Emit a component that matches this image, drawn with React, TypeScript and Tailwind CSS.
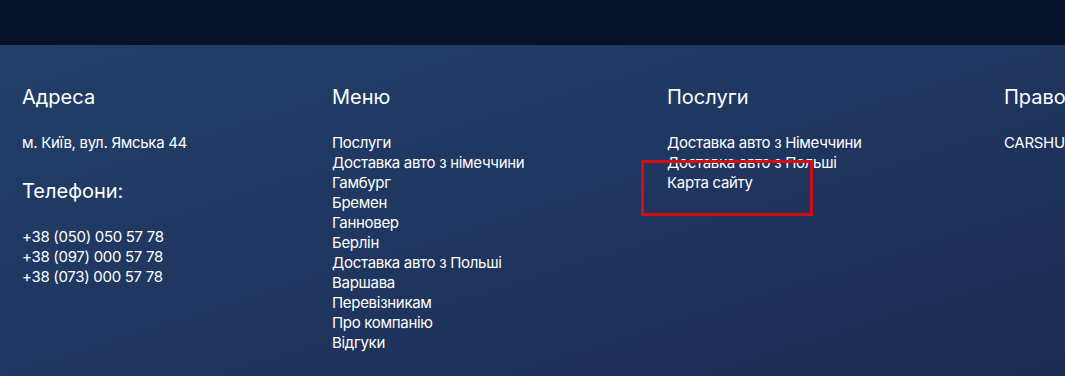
import React from "react";

const menu = [
  "Послуги",
  "Доставка авто з німеччини",
  "Гамбург",
  "Бремен",
  "Ганновер",
  "Берлін",
  "Доставка авто з Польші",
  "Варшава",
  "Перевізникам",
  "Про компанію",
  "Відгуки",
];

const services = ["Доставка авто з Німеччини", "Доставка авто з Польші", "Карта сайту"];

const phones = ["+38 (050) 050 57 78", "+38 (097) 000 57 78", "+38 (073) 000 57 78"];

export default function App() {
  return (
    <div className="w-[1065px] h-[376px] overflow-hidden font-['Inter',sans-serif] text-white">
      {/* top strip */}
      <div className="h-[45px] bg-[#071129]" />

      {/* footer */}
      <footer className="relative h-[331px] bg-gradient-to-br from-[#213f68] via-[#1f3660] to-[#1d2c52] pl-[22px] pt-[38px]">
        <div className="flex whitespace-nowrap">
          <div className="w-[310px] shrink-0">
            <h3 className="text-[20px] leading-7">Адреса</h3>
            <p className="mt-[22px] text-[15px] leading-5 tracking-[-0.3px]">м. Київ, вул. Ямська 44</p>
            <h3 className="mt-[24px] text-[20px] leading-7">Телефони:</h3>
            <ul className="mt-[22px] text-[15px] leading-5 tracking-[-0.3px]">
              {phones.map((p) => (
                <li key={p}>{p}</li>
              ))}
            </ul>
          </div>

          <div className="w-[335px] shrink-0">
            <h3 className="text-[20px] leading-7">Меню</h3>
            <ul className="mt-[22px] text-[15px] leading-5 tracking-[-0.3px]">
              {menu.map((m) => (
                <li key={m}>{m}</li>
              ))}
            </ul>
          </div>

          <div className="relative w-[337px] shrink-0">
            <h3 className="text-[20px] leading-7">Послуги</h3>
            <ul className="mt-[22px] text-[15px] leading-5 tracking-[-0.3px]">
              {services.map((s) => (
                <li key={s}>{s}</li>
              ))}
            </ul>
            {/* highlight box */}
            <div className="absolute left-[-26px] top-[77px] h-[56px] w-[172px] border-[3px] border-[#d40d12]" />
          </div>

          <div className="shrink-0">
            <h3 className="text-[20px] leading-7">Правова інформація</h3>
            <p className="mt-[22px] text-[15px] leading-5 tracking-[-0.3px]">CARSHUTTLE</p>
          </div>
        </div>
      </footer>
    </div>
  );
}
